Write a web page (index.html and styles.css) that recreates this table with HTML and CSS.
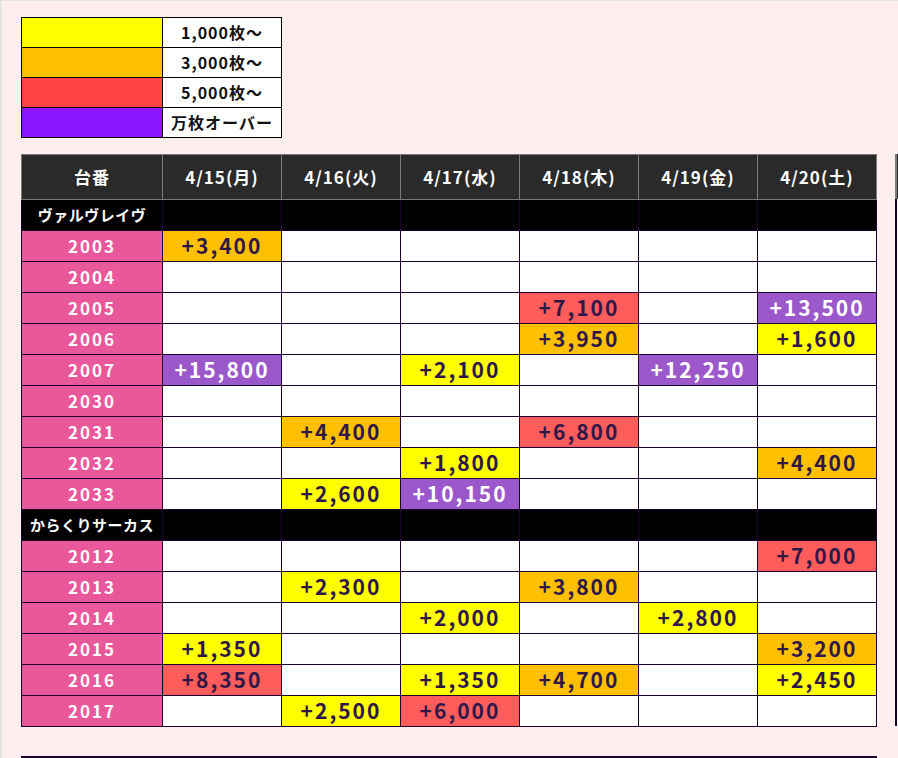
FILE: index.html
```html
<!DOCTYPE html>
<html lang="ja">
<head>
<meta charset="utf-8">
<title>差枚表</title>
<link rel="stylesheet" href="styles.css">
</head>
<body>
<div class="frame">
  <table class="legend">
    <tr><td class="sw c-yellow"></td><td class="lbl">1,000枚〜</td></tr>
    <tr><td class="sw c-orange"></td><td class="lbl">3,000枚〜</td></tr>
    <tr><td class="sw c-red-l"></td><td class="lbl">5,000枚〜</td></tr>
    <tr><td class="sw c-purple-l"></td><td class="lbl">万枚オーバー</td></tr>
  </table>

  <div class="weeks">
    <table class="grid">
      <thead>
        <tr><th class="col-no">台番</th><th>4/15(月)</th><th>4/16(火)</th><th>4/17(水)</th><th>4/18(木)</th><th>4/19(金)</th><th>4/20(土)</th></tr>
      </thead>
      <tbody>
        <tr class="sec"><td>ヴァルヴレイヴ</td><td></td><td></td><td></td><td></td><td></td><td></td></tr>
        <tr><td class="no">2003</td><td class="o">+3,400</td><td></td><td></td><td></td><td></td><td></td></tr>
        <tr><td class="no">2004</td><td></td><td></td><td></td><td></td><td></td><td></td></tr>
        <tr><td class="no">2005</td><td></td><td></td><td></td><td class="r">+7,100</td><td></td><td class="p">+13,500</td></tr>
        <tr><td class="no">2006</td><td></td><td></td><td></td><td class="o">+3,950</td><td></td><td class="y">+1,600</td></tr>
        <tr><td class="no">2007</td><td class="p">+15,800</td><td></td><td class="y">+2,100</td><td></td><td class="p">+12,250</td><td></td></tr>
        <tr><td class="no">2030</td><td></td><td></td><td></td><td></td><td></td><td></td></tr>
        <tr><td class="no">2031</td><td></td><td class="o">+4,400</td><td></td><td class="r">+6,800</td><td></td><td></td></tr>
        <tr><td class="no">2032</td><td></td><td></td><td class="y">+1,800</td><td></td><td></td><td class="o">+4,400</td></tr>
        <tr><td class="no">2033</td><td></td><td class="y">+2,600</td><td class="p">+10,150</td><td></td><td></td><td></td></tr>
        <tr class="sec"><td>からくりサーカス</td><td></td><td></td><td></td><td></td><td></td><td></td></tr>
        <tr><td class="no">2012</td><td></td><td></td><td></td><td></td><td></td><td class="r">+7,000</td></tr>
        <tr><td class="no">2013</td><td></td><td class="y">+2,300</td><td></td><td class="o">+3,800</td><td></td><td></td></tr>
        <tr><td class="no">2014</td><td></td><td></td><td class="y">+2,000</td><td></td><td class="y">+2,800</td><td></td></tr>
        <tr><td class="no">2015</td><td class="y">+1,350</td><td></td><td></td><td></td><td></td><td class="o">+3,200</td></tr>
        <tr><td class="no">2016</td><td class="r">+8,350</td><td></td><td class="y">+1,350</td><td class="o">+4,700</td><td></td><td class="y">+2,450</td></tr>
        <tr><td class="no">2017</td><td></td><td class="y">+2,500</td><td class="r">+6,000</td><td></td><td></td><td></td></tr>
      </tbody>
    </table>
    <div class="next-week" aria-hidden="true">
      <div class="nw-head"></div>
      <div class="nw-body"></div>
    </div>
  </div>

  <div class="next-block"></div>
</div>
</body>
</html>
```

FILE: styles.css
```css
html, body {
  margin: 0;
  padding: 0;
  overflow: hidden;
  height: 100%;
}
body {
  background: #ffeeee;
  font-family: "Noto Sans CJK JP", "Noto Sans", sans-serif;
  font-weight: 700;
}
.frame {
  border-left: 2px solid #e4e4e4;
  border-top: 1px solid #e4e4e4;
  padding: 16px 0 0 19px;
  height: 100%;
  box-sizing: border-box;
}

/* legend */
.legend {
  border-collapse: collapse;
}
.legend td {
  border: 1px solid #000;
  height: 28px;
  padding: 0 0 1px;
}
.legend .sw { width: 140px; }
.legend .lbl {
  width: 118px;
  background: #fff;
  text-align: center;
  font-size: 16px;
  line-height: 1;
  color: #111;
  letter-spacing: 1px;
}
.c-yellow { background: #ffff00; }
.c-orange { background: #ffc000; }
.c-red-l { background: #ff4242; }
.c-purple-l { background: #8c16ff; }

/* main grid */
.weeks {
  display: flex;
  gap: 18px;
  margin-top: 16px;
  align-items: flex-start;
}
.grid {
  border-collapse: collapse;
  flex: none;
  table-layout: fixed;
  width: 856px;
}
.grid th {
  background: #2a2a2a;
  color: #fff;
  border: 1px solid #7a7a7a;
  height: 42px;
  padding: 0 0 2px;
  width: 118px;
  font-size: 17px;
  line-height: 1;
  letter-spacing: 1px;
}
.grid th.col-no { width: 140px; }
.grid td {
  border: 1px solid #1c0030;
  height: 28px;
  padding: 0 0 2px;
  background: #fff;
  text-align: center;
  font-size: 21px;
  line-height: 1;
  color: #2f1848;
  letter-spacing: 2px;
}
.grid td.no {
  background: #e9589a;
  color: #fff;
  font-size: 17px;
  letter-spacing: 2px;
}
.grid tr.sec td {
  background: #000;
  color: #fff;
  font-size: 15px;
  letter-spacing: 0.5px;
}
.grid td.y { background: #ffff00; }
.grid td.o { background: #ffc000; }
.grid td.r { background: #ff5c5c; }
.grid td.p { background: #9b58cb; color: #fff; }

/* clipped next table on the right */
.next-week {
  flex: none;
  width: 300px;
}
.nw-head {
  height: 45px;
  border-left: 2px solid #7a7a7a;
  background: #2a2a2a;
}
.nw-body {
  height: 527px;
  border-left: 2px solid #1c0030;
  background: #fff;
}

/* next block below */
.next-block {
  width: 856px;
  margin-top: 29px;
  border-top: 2px solid #1c0030;
}
```
